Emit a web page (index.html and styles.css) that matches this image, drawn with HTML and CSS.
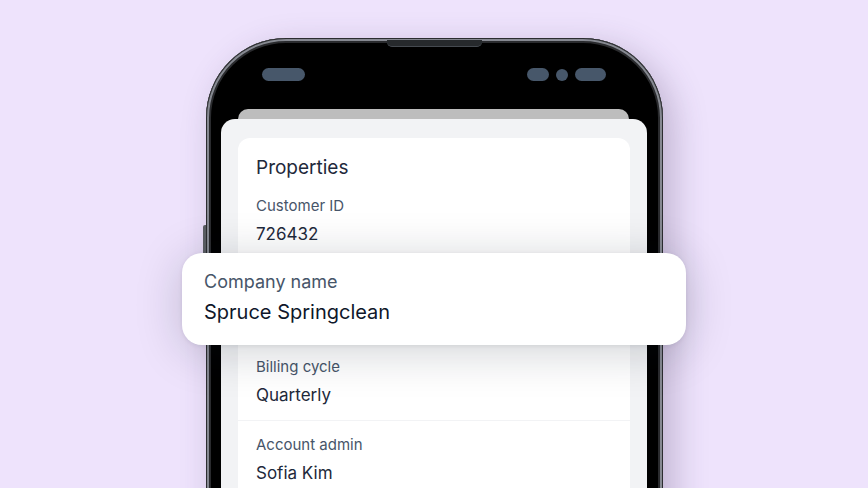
FILE: index.html
```html
<!DOCTYPE html>
<html lang="en">
<head>
<meta charset="utf-8">
<title>Properties</title>
<link rel="stylesheet" href="styles.css">
</head>
<body>
<div class="scene">
  <div class="phone">
    <div class="speaker"></div>
    <div class="side-btn"></div>
    <div class="status">
      <div class="pill pill-left"></div>
      <div class="status-right">
        <div class="pill pill-a"></div>
        <div class="pill dot"></div>
        <div class="pill pill-b"></div>
      </div>
    </div>
    <div class="back-card"></div>
    <div class="sheet">
      <div class="card">
        <div class="title">Properties</div>
        <div class="field first">
          <div class="label">Customer ID</div>
          <div class="value">726432</div>
        </div>
        <div class="field-spacer"></div>
        <div class="field">
          <div class="label">Billing cycle</div>
          <div class="value">Quarterly</div>
        </div>
        <div class="field">
          <div class="label">Account admin</div>
          <div class="value">Sofia Kim</div>
        </div>
      </div>
    </div>
  </div>
  <div class="popup">
    <div class="popup-label">Company name</div>
    <div class="popup-value">Spruce Springclean</div>
  </div>
</div>
</body>
</html>
```

FILE: styles.css
```css
* { box-sizing: border-box; }
html, body {
  margin: 0;
  padding: 0;
}
body {
  width: 868px;
  height: 488px;
  overflow: hidden;
  background: #eee3fc;
  font-family: Inter, "Noto Sans", "Liberation Sans", sans-serif;
}
.scene {
  position: relative;
  width: 868px;
  height: 488px;
  overflow: hidden;
  padding-top: 38px;
}
.phone {
  position: relative;
  margin-left: 206px;
  width: 457px;
  height: 520px;
  background: #000;
  border-radius: 80px 80px 0 0;
  box-shadow:
    inset 0 0 0 1px #2c2d30,
    inset 0 0 0 3px #868991,
    inset 0 0 0 5px #2a2b2e,
    10px 10px 34px rgba(70, 50, 95, 0.28);
  display: flex;
  flex-direction: column;
}
.speaker {
  position: absolute;
  left: 181px;
  top: 2px;
  width: 95px;
  height: 7px;
  background: #26292c;
  border-bottom: 1px solid #454a50;
  border-radius: 0 0 5px 5px;
}
.side-btn {
  position: absolute;
  left: -3px;
  top: 187px;
  width: 3px;
  height: 36px;
  background: #5a5d62;
  border-radius: 2px 0 0 2px;
}
.status {
  display: flex;
  justify-content: space-between;
  align-items: center;
  padding: 30px 57px 0 56px;
  height: 43px;
}
.status-right {
  display: flex;
  align-items: center;
  gap: 7px;
}
.pill {
  height: 13px;
  border-radius: 7px;
  background: #47576a;
}
.pill-left { width: 43px; }
.pill-a { width: 22px; }
.dot { width: 12px; height: 12px; border-radius: 50%; }
.pill-b { width: 31px; }
.back-card {
  margin: 28px 34px 0 32px;
  height: 10px;
  background: #bdbdbd;
  border-radius: 11px 11px 0 0;
}
.sheet {
  margin: 0 16px 0 15px;
  flex: 1;
  background: #f2f3f5;
  border-radius: 14px 14px 0 0;
  padding: 19px 17px 0 17px;
}
.card {
  background: #fff;
  border-radius: 12px 12px 0 0;
  padding: 18px 0 0 0;
  height: 420px;
}
.title {
  padding: 0 18px;
  font-size: 19px;
  line-height: 24px;
  color: #1e293b;
  font-weight: 400;
}
.field {
  padding: 14px 18px 14px 18px;
  border-top: 1px solid #f2f3f5;
}
.field.first {
  border-top: none;
  padding-top: 16px;
}
.field-spacer {
  height: 83px;
  border-top: 1px solid #f2f3f5;
}
.label {
  font-size: 15px;
  line-height: 20px;
  color: #475569;
}
.value {
  margin-top: 7px;
  font-size: 17px;
  line-height: 22px;
  color: #1e293b;
}
.popup {
  position: absolute;
  left: 182px;
  top: 253px;
  width: 504px;
  height: 92px;
  background: #fff;
  border-radius: 20px;
  padding: 18px 22px 0 22px;
  box-shadow: 0 6px 48px rgba(15, 23, 42, 0.2), 0 1px 4px rgba(15, 23, 42, 0.08);
}
.popup-label {
  font-size: 18px;
  line-height: 22px;
  color: #475569;
}
.popup-value {
  margin-top: 7px;
  font-size: 20px;
  line-height: 24px;
  color: #0f172a;
}
```
